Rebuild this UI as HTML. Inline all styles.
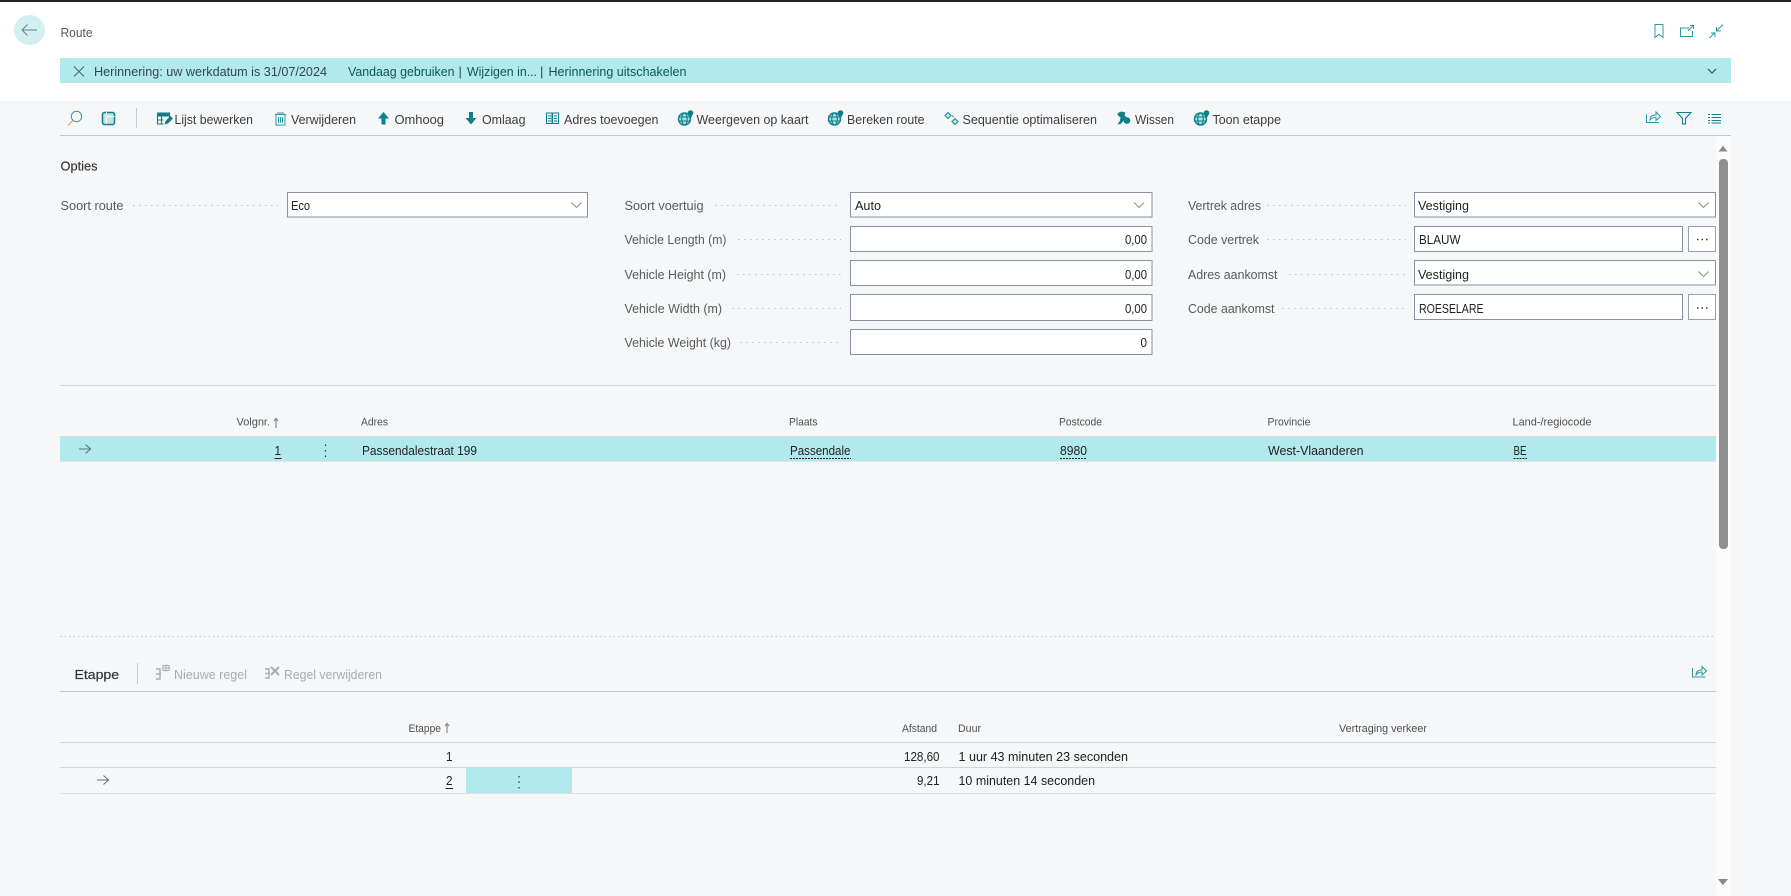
<!DOCTYPE html>
<html lang="nl">
<head>
<meta charset="utf-8">
<title>Route</title>
<style>
html,body{margin:0;padding:0;width:1791px;height:896px;overflow:hidden;background:#f6f7f9}
svg{display:block;position:absolute;left:0;top:0}
text{font-family:"Liberation Sans",sans-serif;font-size:13px;fill:#212121;white-space:pre}
.l{fill:#5a5a5a}
.b{fill:#3d3d3d}
.h{font-size:11px;fill:#505050}
.d{fill:#a9abae}
.n{fill:#10555c}
.f{fill:#fff;stroke:#8b90a0;stroke-width:1}
.i{fill:none;stroke:#0f7f8a;stroke-width:1.1}
.t{fill:none;stroke:#2f98a3;stroke-width:1}
.g{fill:none;stroke:#0f7f8a;stroke-width:1.4}
.s{fill:#0f7f8a}
.u{stroke:#222;stroke-width:1;fill:none}
.du{stroke:#222;stroke-width:1;stroke-dasharray:2 1;fill:none}
.dot{stroke:#bdc0c5;stroke-width:1;stroke-dasharray:1.500 4.500;fill:none}
</style>
</head>
<body>
<svg width="1791" height="896" viewBox="0 0 1791 896" xmlns="http://www.w3.org/2000/svg">
<!-- shell -->
<rect x="0" y="0" width="1791" height="896" fill="#f6f7f9"/>
<rect x="0" y="0" width="1791" height="101" fill="#fff"/>
<rect x="0" y="0" width="1791" height="2" fill="#232323"/>
<rect x="1716" y="136" width="15" height="760" fill="#fbfbfb"/>

<!-- header -->
<ellipse cx="29.500" cy="30" rx="15.500" ry="15" fill="#d3eff2"/>
<path d="M22 30H37M22 30l5.500-5.500M22 30l5.500 5.500" fill="none" stroke="#6a7d84" stroke-width="1"/>
<text x="60.500" y="37" textLength="32" lengthAdjust="spacingAndGlyphs" style="fill:#555">Route</text>
<path class="t" d="M1655 24.500h8v13l-4-3.200-4 3.200z"/>
<path class="t" d="M1689 28h-8.500v8.500h12V31M1688 30.500l5-4.500M1690 25.500h3.500V29"/>
<path class="t" d="M1716.500 31l6.500-6.500M1716.500 27v4h4.500M1709.500 38l5.500-5.500M1711 33h4v4"/>

<!-- banner -->
<rect x="60" y="58" width="1671" height="25" fill="#b2e9ec"/>
<path d="M74 66.500l10 10M84 66.500l-10 10" stroke="#46666b" stroke-width="1" fill="none"/>
<text x="94" y="76" textLength="233" lengthAdjust="spacingAndGlyphs" style="fill:#2f4a4e">Herinnering: uw werkdatum is 31/07/2024</text>
<text class="n" x="348" y="76" textLength="106.500" lengthAdjust="spacingAndGlyphs">Vandaag gebruiken</text>
<text class="n" x="458.500" y="76">|</text>
<text class="n" x="467" y="76" textLength="70" lengthAdjust="spacingAndGlyphs">Wijzigen in...</text>
<text class="n" x="540" y="76">|</text>
<text class="n" x="548.500" y="76" textLength="138" lengthAdjust="spacingAndGlyphs">Herinnering uitschakelen</text>
<path d="M1708 69l4 4 4-4" fill="none" stroke="#1f5c64" stroke-width="1.200"/>

<!-- toolbar -->
<circle cx="76.500" cy="116.500" r="5.200" fill="none" stroke="#2f98a3" stroke-width="1"/>
<path d="M72.800 120.500L68 125.500" fill="none" stroke="#c9a56a" stroke-width="1.200"/>
<rect x="102.500" y="112.500" width="12" height="12" rx="2" fill="#bfe5e8" stroke="#0f7f8a" stroke-width="1.500"/>
<path d="M106.500 112v12M106.500 116.500h8" stroke="#f6f7f9" stroke-width="1" fill="none"/>
<rect x="136" y="108" width="1" height="20" fill="#c8cace"/>

<path class="i" d="M157.500 113.500v10.500h6M169.500 113.500v4M157.500 120h6M161.500 116.500v7.500"/>
<rect x="157" y="112.500" width="13" height="4" class="s"/>
<path d="M164.500 124.500l1-3.500 5-5 2.500 2.500-5 5z" class="s"/>
<text class="b" x="174.500" y="124" textLength="78.500" lengthAdjust="spacingAndGlyphs">Lijst bewerken</text>

<path class="t" stroke-width="1.200" d="M276 114.500h9v10.500h-9zM275 114.500h11M278 114.500v-1.500h5v1.500M278.500 117v6M280.500 117v6M282.500 117v6"/>
<text class="b" x="291" y="124" textLength="65" lengthAdjust="spacingAndGlyphs">Verwijderen</text>

<path class="s" d="M383.500 112l5.500 6.500h-3.500v6h-4v-6H378z"/>
<text class="b" x="394.500" y="124" textLength="49.500" lengthAdjust="spacingAndGlyphs">Omhoog</text>

<path class="s" d="M471 124.500l-5.500-6.500h3.500V112h4v6h3.500z"/>
<text class="b" x="482" y="124" textLength="43.500" lengthAdjust="spacingAndGlyphs">Omlaag</text>

<path class="i" d="M546.500 113h5.500v10.500h-5.500zM552.500 113h6v10.500h-6zM548 116h3M548 118.500h3M548 121h3M554 116h3M554 118.500h3M554 121h3"/>
<text class="b" x="564" y="124" textLength="94.500" lengthAdjust="spacingAndGlyphs">Adres toevoegen</text>

<!-- globe icons -->
<g><circle cx="684.500" cy="119" r="6" fill="#a9dde1" class="g" style="fill:#a9dde1"/><ellipse cx="684.500" cy="119" rx="2.800" ry="6" class="i"/><path class="i" d="M678.500 117h12M678.500 121h12"/><circle cx="690.500" cy="113" r="2.800" class="s"/><path class="s" d="M688.300 114.500l2.200 4 2.200-4z"/></g>
<text class="b" x="696.500" y="124" textLength="112" lengthAdjust="spacingAndGlyphs">Weergeven op kaart</text>
<g><circle cx="834.500" cy="119" r="6" class="g" style="fill:#a9dde1"/><ellipse cx="834.500" cy="119" rx="2.800" ry="6" class="i"/><path class="i" d="M828.500 117h12M828.500 121h12"/><circle cx="840.500" cy="113" r="2.800" class="s"/><path class="s" d="M838.300 114.500l2.200 4 2.200-4z"/></g>
<text class="b" x="847" y="124" textLength="77.500" lengthAdjust="spacingAndGlyphs">Bereken route</text>

<path d="M948 112.500l3 3-3 3-3-3z" fill="#bfe5e8" stroke="#2f929c" stroke-width="1.200"/>
<path d="M955 118.500l3 3-3 3-3-3z" fill="#bfe5e8" stroke="#2f929c" stroke-width="1.200"/>
<path d="M952 115.500l1.500 1.500" stroke="#2f929c" stroke-width="1"/>
<text class="b" x="962.500" y="124" textLength="134.500" lengthAdjust="spacingAndGlyphs">Sequentie optimaliseren</text>

<path class="s" d="M1117.500 113l4-1.500 4 1-1 2.500 2.500 3-2.500 1-1 2-3 3-3 .5 2.500-4 .5-3-2.500-2z"/>
<circle cx="1127" cy="120.500" r="3.300" class="s"/>
<text class="b" x="1135" y="124" textLength="39" lengthAdjust="spacingAndGlyphs">Wissen</text>

<g><circle cx="1200.500" cy="119" r="6" class="g" style="fill:#a9dde1"/><ellipse cx="1200.500" cy="119" rx="2.800" ry="6" class="i"/><path class="i" d="M1194.500 117h12M1194.500 121h12"/><circle cx="1206.500" cy="113" r="2.800" class="s"/><path class="s" d="M1204.300 114.500l2.200 4 2.200-4z"/></g>
<text class="b" x="1212.500" y="124" textLength="68.500" lengthAdjust="spacingAndGlyphs">Toon etappe</text>

<path class="t" d="M1646.500 114v8.500h12.500M1650 120c0-3.500 2.500-5 6-5v-3l4.500 4.500-4.500 4v-3c-2.500 0-4.500 .5-6 2.500z"/>
<path class="i" d="M1677 112.500h14l-5.500 6v5.500h-3v-5.500z"/>
<path class="i" d="M1708 114.500h2M1711.500 114.500h9.500M1708 117.500h2M1711.500 117.500h9.500M1708 120.500h2M1711.500 120.500h9.500M1708 123h2M1711.500 123h9.500"/>
<rect x="60" y="135" width="1671" height="1" fill="#c6c8cb"/>

<!-- scrollbar -->
<path d="M1719.500 151l3.500-4.500 3.500 4.500z" fill="#8a8a8a" stroke="#8a8a8a"/>
<rect x="1719" y="159" width="9" height="390" rx="4" fill="#8f8f8f"/>
<path d="M1719 879.500h8l-4 5z" fill="#8a8a8a" stroke="#8a8a8a"/>

<!-- section Opties -->
<text x="60.500" y="170.500" textLength="37" lengthAdjust="spacingAndGlyphs" style="fill:#333;stroke:#333;stroke-width:.15">Opties</text>

<text class="l" x="60.500" y="210" textLength="63" lengthAdjust="spacingAndGlyphs">Soort route</text>
<path class="dot" d="M133 205.500H278"/>
<rect class="f" x="287.500" y="192.500" width="300" height="24.500"/>
<text x="291" y="210" textLength="19" lengthAdjust="spacingAndGlyphs">Eco</text>
<path d="M571.500 202.500l5 5 5-5" fill="none" stroke="#8a8f9c" stroke-width="1"/>

<text class="l" x="624.500" y="210" textLength="79" lengthAdjust="spacingAndGlyphs">Soort voertuig</text>
<path class="dot" d="M715 205.500H841"/>
<rect class="f" x="850.500" y="192.500" width="301.500" height="24.500"/>
<text x="855" y="210" textLength="26" lengthAdjust="spacingAndGlyphs">Auto</text>
<path d="M1134 202.500l5 5 5-5" fill="none" stroke="#8a8f9c" stroke-width="1"/>

<text class="l" x="624.500" y="244" textLength="102" lengthAdjust="spacingAndGlyphs">Vehicle Length (m)</text>
<path class="dot" d="M738 239.500H841"/>
<rect class="f" x="850.500" y="226.500" width="301.500" height="25"/>
<text x="1125" y="244" textLength="22" lengthAdjust="spacingAndGlyphs">0,00</text>

<text class="l" x="624.500" y="279" textLength="101.500" lengthAdjust="spacingAndGlyphs">Vehicle Height (m)</text>
<path class="dot" d="M737 274.500H841"/>
<rect class="f" x="850.500" y="260.500" width="301.500" height="25"/>
<text x="1125" y="279" textLength="22" lengthAdjust="spacingAndGlyphs">0,00</text>

<text class="l" x="624.500" y="313" textLength="97.500" lengthAdjust="spacingAndGlyphs">Vehicle Width (m)</text>
<path class="dot" d="M732 308.500H841"/>
<rect class="f" x="850.500" y="294.500" width="301.500" height="26"/>
<text x="1125" y="313" textLength="22" lengthAdjust="spacingAndGlyphs">0,00</text>

<text class="l" x="624.500" y="347" textLength="106.500" lengthAdjust="spacingAndGlyphs">Vehicle Weight (kg)</text>
<path class="dot" d="M740 342.500H841"/>
<rect class="f" x="850.500" y="329.500" width="301.500" height="25"/>
<text x="1140.500" y="347" textLength="6.500" lengthAdjust="spacingAndGlyphs">0</text>

<text class="l" x="1188" y="210" textLength="73" lengthAdjust="spacingAndGlyphs">Vertrek adres</text>
<path class="dot" d="M1267 205.500H1406"/>
<rect class="f" x="1414.500" y="192.500" width="301" height="24.500"/>
<text x="1418" y="210" textLength="51" lengthAdjust="spacingAndGlyphs">Vestiging</text>
<path d="M1698.500 202.500l5 5 5-5" fill="none" stroke="#8a8f9c" stroke-width="1"/>

<text class="l" x="1188" y="244" textLength="71" lengthAdjust="spacingAndGlyphs">Code vertrek</text>
<path class="dot" d="M1267 239.500H1406"/>
<rect class="f" x="1414.500" y="226.500" width="268" height="25"/>
<text x="1419" y="244" textLength="41.500" lengthAdjust="spacingAndGlyphs">BLAUW</text>
<rect class="f" x="1688.500" y="226.500" width="27" height="25" style="stroke:#9a9eac"/>
<path d="M1697 239.500h1.500M1701.500 239.500h1.500M1706 239.500h1.500" stroke="#333" stroke-width="1.400"/>

<text class="l" x="1188" y="279" textLength="89.500" lengthAdjust="spacingAndGlyphs">Adres aankomst</text>
<path class="dot" d="M1289 274.500H1406"/>
<rect class="f" x="1414.500" y="260.500" width="301" height="24.500"/>
<text x="1418" y="279" textLength="51" lengthAdjust="spacingAndGlyphs">Vestiging</text>
<path d="M1698.500 271.500l5 5 5-5" fill="none" stroke="#8a8f9c" stroke-width="1"/>

<text class="l" x="1188" y="313" textLength="86.500" lengthAdjust="spacingAndGlyphs">Code aankomst</text>
<path class="dot" d="M1282 308.500H1406"/>
<rect class="f" x="1414.500" y="294.500" width="268" height="25"/>
<text x="1419" y="313" textLength="64.500" lengthAdjust="spacingAndGlyphs">ROESELARE</text>
<rect class="f" x="1688.500" y="294.500" width="27" height="25" style="stroke:#9a9eac"/>
<path d="M1697 308h1.500M1701.500 308h1.500M1706 308h1.500" stroke="#333" stroke-width="1.400"/>

<rect x="60" y="385" width="1656" height="1" fill="#d3d4d8"/>

<!-- table 1 -->
<text class="h" x="236.500" y="425.500" textLength="33.500" lengthAdjust="spacingAndGlyphs">Volgnr.</text>
<path d="M276 419v9M274 421l2-2.500 2 2.500" stroke="#8a8a8a" stroke-width="1.200" fill="none"/>
<text class="h" x="361" y="425.500" textLength="27" lengthAdjust="spacingAndGlyphs">Adres</text>
<text class="h" x="789" y="425.500" textLength="28.500" lengthAdjust="spacingAndGlyphs">Plaats</text>
<text class="h" x="1059" y="425.500" textLength="43" lengthAdjust="spacingAndGlyphs">Postcode</text>
<text class="h" x="1267.500" y="425.500" textLength="43" lengthAdjust="spacingAndGlyphs">Provincie</text>
<text class="h" x="1512.500" y="425.500" textLength="79" lengthAdjust="spacingAndGlyphs">Land-/regiocode</text>

<rect x="60" y="436" width="1656" height="1" fill="#d8d9dc"/>
<rect x="60" y="437" width="1656" height="24" fill="#b2e9ec"/>
<rect x="60" y="461" width="1656" height="1" fill="#e3e4e7"/>
<path d="M79 449h12M85.500 444.500l5 4.500-5 4.500" fill="none" stroke="#55727a" stroke-width="1"/>
<text x="274.500" y="455" textLength="6.500" lengthAdjust="spacingAndGlyphs">1</text>
<path class="u" d="M274.500 458.500H281.500"/>
<path d="M325.500 444.500v1.500M325.500 450v1.500M325.500 455.500v1.500" stroke="#333" stroke-width="1.200"/>
<text x="362" y="455" textLength="115" lengthAdjust="spacingAndGlyphs">Passendalestraat 199</text>
<text x="790" y="455" textLength="60.500" lengthAdjust="spacingAndGlyphs">Passendale</text>
<path class="du" d="M790 458.500H851"/>
<text x="1060" y="455" textLength="27" lengthAdjust="spacingAndGlyphs">8980</text>
<path class="du" d="M1060 458.500H1087"/>
<text x="1268" y="455" textLength="95.500" lengthAdjust="spacingAndGlyphs">West-Vlaanderen</text>
<text x="1513.500" y="455" textLength="13" lengthAdjust="spacingAndGlyphs">BE</text>
<path class="du" d="M1513.500 458.500H1527"/>

<!-- splitter -->
<path class="dot" d="M60 636.500H1716" style="stroke-dasharray:1.500 3"/>

<!-- part toolbar -->
<text x="74.500" y="679" textLength="44.500" lengthAdjust="spacingAndGlyphs" style="fill:#333;stroke:#333;stroke-width:.2">Etappe</text>
<rect x="137" y="663" width="1" height="21" fill="#c8cace"/>
<path d="M156 669h4v10h-4M156 674h5" fill="none" stroke="#a9abae" stroke-width="1.400"/>
<path d="M163 665.500h6v5h-6zM166 664.500v7M162 668h8" fill="none" stroke="#a9abae" stroke-width="1"/>
<text class="d" x="174" y="679" textLength="73" lengthAdjust="spacingAndGlyphs">Nieuwe regel</text>
<path d="M265 669h4v9h-4M265 673.500h5" fill="none" stroke="#a9abae" stroke-width="1.400"/>
<path d="M271 667l8 8M279 667l-8 8" fill="none" stroke="#a9abae" stroke-width="2"/>
<text class="d" x="284" y="679" textLength="98" lengthAdjust="spacingAndGlyphs">Regel verwijderen</text>
<path class="t" d="M1692.500 668v9h13M1696 675c0-3.500 2.500-5 6-5v-3.500l4.500 4.500-4.500 4v-3c-2.500 0-4.500 1-6 3z"/>
<rect x="60" y="691" width="1656" height="1" fill="#c6c8cb"/>

<!-- table 2 -->
<text class="h" x="408.500" y="732" textLength="32.500" lengthAdjust="spacingAndGlyphs">Etappe</text>
<path d="M447 724v9M445 726l2-2.500 2 2.500" stroke="#8a8a8a" stroke-width="1.200" fill="none"/>
<text class="h" x="902" y="732" textLength="35" lengthAdjust="spacingAndGlyphs">Afstand</text>
<text class="h" x="958" y="732" textLength="23" lengthAdjust="spacingAndGlyphs">Duur</text>
<text class="h" x="1339" y="732" textLength="88" lengthAdjust="spacingAndGlyphs">Vertraging verkeer</text>
<rect x="60" y="742" width="1656" height="1" fill="#d3d4d8"/>
<text x="446" y="761" textLength="6.500" lengthAdjust="spacingAndGlyphs">1</text>
<text x="904" y="761" textLength="35.500" lengthAdjust="spacingAndGlyphs">128,60</text>
<text x="958.500" y="761" textLength="169.500" lengthAdjust="spacingAndGlyphs">1 uur 43 minuten 23 seconden</text>
<rect x="60" y="767" width="1656" height="1" fill="#d3d4d8"/>
<path d="M97 780h12M103.500 775.500l5 4.500-5 4.500" fill="none" stroke="#6a6f74" stroke-width="1"/>
<text x="446" y="785" textLength="6.500" lengthAdjust="spacingAndGlyphs">2</text>
<path class="u" d="M445.500 788.500H453"/>
<rect x="466" y="768" width="106" height="25" fill="#b2e9ec"/>
<path d="M519 776v1.500M519 781.500v1.500M519 787v1.500" stroke="#333" stroke-width="1.200"/>
<text x="917" y="785" textLength="22.500" lengthAdjust="spacingAndGlyphs">9,21</text>
<text x="958.500" y="785" textLength="136.500" lengthAdjust="spacingAndGlyphs">10 minuten 14 seconden</text>
<rect x="60" y="793" width="1656" height="1" fill="#dfe0e3"/>
</svg>
</body>
</html>
